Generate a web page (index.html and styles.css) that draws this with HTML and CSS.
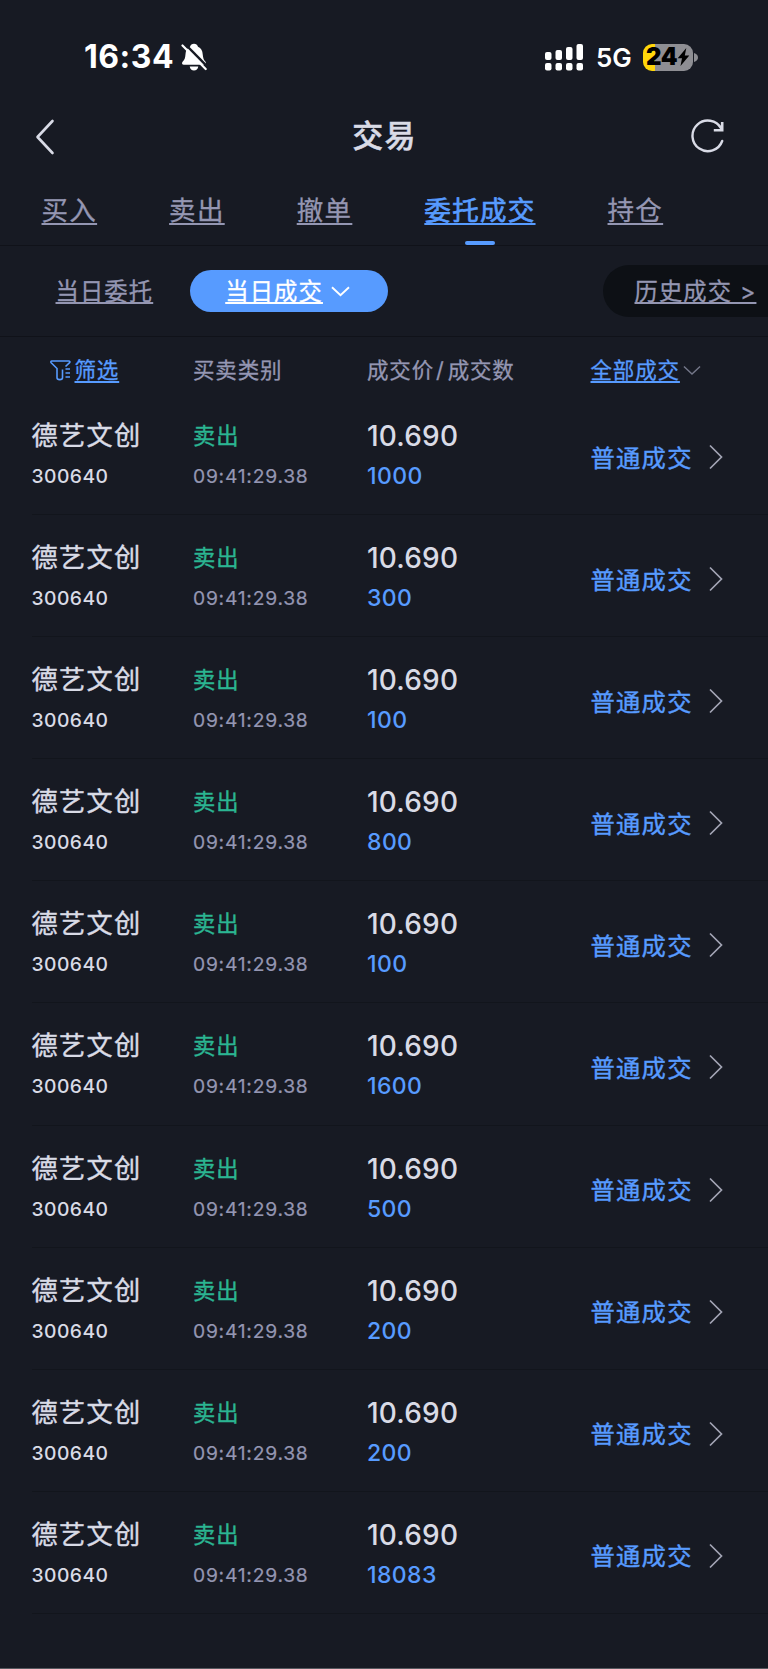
FILE: index.html
```html
<!DOCTYPE html>
<html lang="zh-CN">
<head>
<meta charset="utf-8">
<title>交易</title>
<link rel="stylesheet" href="styles.css">
</head>
<body>
<svg class="defs" aria-hidden="true">
  <symbol id="next" viewBox="0 0 16 28"><path d="M2 2.500 13.500 14 2 25.500" fill="none" stroke="#a3a5b5" stroke-width="1.700"/></symbol>
</svg>
<div class="screen">
  <div class="status">
    <span class="clock">16:34</span>
    <svg class="bell" viewBox="0 0 26 28"><path d="M13 .8c2 0 3.500 1.300 4 3 3.200 1.300 4.500 4.200 4.700 7.400.3 4 1.200 5.800 2.800 7.600.8 1 .5 3-1.300 3H2.800c-1.800 0-2.300-1.900-1.200-3 2-2 2.600-3.800 2.900-7.600.2-3.200 1.500-6.100 4.500-7.400.5-1.700 2-3 4-3zM8.700 23.400h8.600c-.4 2.500-2 4-4.300 4s-3.900-1.500-4.300-4z" fill="#fff"/><path d="M3.500.5 27 24.200" stroke="#171a23" stroke-width="2.400"/><path d="M1.500 2.500 24.700 26" stroke="#fff" stroke-width="2.200" stroke-linecap="round"/></svg>
    <svg class="signal" viewBox="0 0 38 27" fill="#fff"><rect x="0" y="8" width="6.500" height="8" rx="2"/><rect x="10.500" y="6" width="6.500" height="10" rx="2"/><rect x="21" y="3" width="6.500" height="13" rx="2"/><rect x="31.500" y="0" width="6.500" height="16" rx="2"/><rect x="0" y="19" width="6.500" height="7.500" rx="2"/><rect x="10.500" y="19" width="6.500" height="7.500" rx="2"/><rect x="21" y="19" width="6.500" height="7.500" rx="2"/><rect x="31.500" y="19" width="6.500" height="7.500" rx="2"/></svg>
    <span class="net">5G</span>
    <span class="battery"><span class="level">24</span><svg class="bolt" viewBox="0 0 12 18"><path d="M8.800 0 .2 10.300h4.300L3 18l8.800-10.500H7.300z"/></svg></span>
    <svg class="cap" viewBox="0 0 4 9"><path d="M0 0c2.500.6 4 2.300 4 4.500S2.500 8.400 0 9z" fill="#8e8e93"/></svg>
  </div>

  <header class="nav">
    <svg class="back" viewBox="0 0 20 36"><path d="M17.500 2 2.500 18l15 16" fill="none" stroke="#d9dbe6" stroke-width="2.600" stroke-linecap="round" stroke-linejoin="round"/></svg>
    <h1 class="title">交易</h1>
    <svg class="reload" viewBox="0 0 34 34"><path d="M31.200 22A15.300 15.300 0 1 1 30.200 9.500" fill="none" stroke="#d9dbe6" stroke-width="2.400" stroke-linecap="round"/><path d="M31.200 3v8.300h-8.400" fill="none" stroke="#d9dbe6" stroke-width="2.600"/></svg>
  </header>

  <nav class="tabs">
    <a class="tab">买入</a><a class="tab">卖出</a><a class="tab">撤单</a><a class="tab active">委托成交</a><a class="tab">持仓</a>
  </nav>

  <div class="filters">
    <a class="sub">当日委托</a>
    <div class="pill"><a class="sub">当日成交</a><svg class="down" viewBox="0 0 19 11"><path d="M1 1.200 9.500 9.300 18 1.200" fill="none" stroke="#fff" stroke-width="1.900"/></svg></div>
    <div class="history"><a class="sub">历史成交 &gt;</a></div>
  </div>

  <div class="grid head">
    <div class="filter"><svg class="funnel" viewBox="0 0 21 21"><path d="M15.500 6.500 19.600 2.700C20.200 2 19.800 1 18.900 1H1.800C.9 1 .6 2 1.200 2.700L7 8.500v9.300c0 2.400 5.500 2.400 5.500 0V9.500M15.500 9h4.500M15.500 13h4.500M15.500 17h4.500" fill="none" stroke="#579bff" stroke-width="1.600"/></svg><a class="link">筛选</a></div>
    <div>买卖类别</div>
    <div>成交价<span class="slash">/</span>成交数</div>
    <div class="all"><a class="link">全部成交</a><svg class="caret" viewBox="0 0 19 11"><path d="M1 1.200 9.500 9.300 18 1.200" fill="none" stroke="#747789" stroke-width="1.500"/></svg></div>
  </div>

  <main>
    <div class="grid row"><div><div class="name">德艺文创</div><div class="code">300640</div></div><div><div class="side">卖出</div><div class="time">09:41:29.38</div></div><div><div class="price">10.690</div><div class="qty">1000</div></div><div class="kind">普通成交<svg class="next"><use href="#next"/></svg></div></div>
    <div class="grid row"><div><div class="name">德艺文创</div><div class="code">300640</div></div><div><div class="side">卖出</div><div class="time">09:41:29.38</div></div><div><div class="price">10.690</div><div class="qty">300</div></div><div class="kind">普通成交<svg class="next"><use href="#next"/></svg></div></div>
    <div class="grid row"><div><div class="name">德艺文创</div><div class="code">300640</div></div><div><div class="side">卖出</div><div class="time">09:41:29.38</div></div><div><div class="price">10.690</div><div class="qty">100</div></div><div class="kind">普通成交<svg class="next"><use href="#next"/></svg></div></div>
    <div class="grid row"><div><div class="name">德艺文创</div><div class="code">300640</div></div><div><div class="side">卖出</div><div class="time">09:41:29.38</div></div><div><div class="price">10.690</div><div class="qty">800</div></div><div class="kind">普通成交<svg class="next"><use href="#next"/></svg></div></div>
    <div class="grid row"><div><div class="name">德艺文创</div><div class="code">300640</div></div><div><div class="side">卖出</div><div class="time">09:41:29.38</div></div><div><div class="price">10.690</div><div class="qty">100</div></div><div class="kind">普通成交<svg class="next"><use href="#next"/></svg></div></div>
    <div class="grid row"><div><div class="name">德艺文创</div><div class="code">300640</div></div><div><div class="side">卖出</div><div class="time">09:41:29.38</div></div><div><div class="price">10.690</div><div class="qty">1600</div></div><div class="kind">普通成交<svg class="next"><use href="#next"/></svg></div></div>
    <div class="grid row"><div><div class="name">德艺文创</div><div class="code">300640</div></div><div><div class="side">卖出</div><div class="time">09:41:29.38</div></div><div><div class="price">10.690</div><div class="qty">500</div></div><div class="kind">普通成交<svg class="next"><use href="#next"/></svg></div></div>
    <div class="grid row"><div><div class="name">德艺文创</div><div class="code">300640</div></div><div><div class="side">卖出</div><div class="time">09:41:29.38</div></div><div><div class="price">10.690</div><div class="qty">200</div></div><div class="kind">普通成交<svg class="next"><use href="#next"/></svg></div></div>
    <div class="grid row"><div><div class="name">德艺文创</div><div class="code">300640</div></div><div><div class="side">卖出</div><div class="time">09:41:29.38</div></div><div><div class="price">10.690</div><div class="qty">200</div></div><div class="kind">普通成交<svg class="next"><use href="#next"/></svg></div></div>
    <div class="grid row"><div><div class="name">德艺文创</div><div class="code">300640</div></div><div><div class="side">卖出</div><div class="time">09:41:29.38</div></div><div><div class="price">10.690</div><div class="qty">18083</div></div><div class="kind">普通成交<svg class="next"><use href="#next"/></svg></div></div>
  </main>
</div>
</body>
</html>
```

FILE: styles.css
```css
* { box-sizing: border-box; }
body { margin: 0; background: #171a23; font-family: "Inter", "Noto Sans CJK SC", sans-serif; color: #d9dbe6; }
svg { display: block; flex: none; }
.defs { display: none; }
.screen { width: 768px; height: 1669px; overflow: hidden; border-bottom: 1px solid #57595f; white-space: nowrap; }

.status { display: flex; align-items: center; height: 114px; padding-left: 84px; color: #fff; }
.clock { width: 96px; font-size: 32px; font-weight: 700; letter-spacing: .5px; line-height: 36px; }
.bell { width: 26px; height: 28px; margin-left: .5px; }
.signal { width: 38px; height: 27px; margin-left: 338.500px; }
.net { width: 47px; margin-left: 13px; padding-top: 2px; font-size: 26px; font-weight: 600; line-height: 32px; }
.battery { display: flex; align-items: center; width: 50px; height: 27px; padding-left: 3px; border-radius: 9px; background: linear-gradient(90deg, #ffd60a 12px, #8e8e93 12px); }
.level { width: 31px; font-size: 24px; font-weight: 900; letter-spacing: -.3px; line-height: 26px; color: #000; }
.bolt { width: 13px; height: 18px; }
.cap { width: 4px; height: 9px; margin-left: 1px; }

.nav { display: flex; align-items: center; justify-content: space-between; height: 46px; padding: 0 43px 0 35px; }
.back { width: 20px; height: 36px; margin-right: 14px; }
.title { margin: 0 0 2px 9px; font-size: 31px; font-weight: 500; letter-spacing: 1.300px; line-height: 44px; -webkit-text-stroke: .5px; }
.reload { width: 34px; height: 34px; margin-bottom: 2px; }

.tabs { display: flex; gap: 72px; height: 86px; padding: 30px 0 0 41.500px; border-bottom: 1px solid #101219; font-size: 26.500px; letter-spacing: 1.300px; line-height: 40px; color: #9496b2; -webkit-text-stroke: .3px; }
.tab, .sub, .link { text-decoration: underline; text-decoration-skip-ink: none; text-decoration-thickness: 1.700px; text-underline-offset: 3px; }
.tab { display: flex; flex-direction: column; align-items: center; }
.active { color: #579bff; -webkit-text-stroke: .7px; }
.active::after { content: ""; width: 30px; height: 4px; margin-top: 11px; border-radius: 2px; background: #579bff; }

.filters { display: flex; align-items: center; height: 91px; padding-left: 55.500px; border-bottom: 1px solid #101219; font-size: 23.300px; letter-spacing: 1.130px; line-height: 36px; color: #9496b2; -webkit-text-stroke: .3px; }
.sub { padding-top: 2px; text-underline-offset: 2px; }
.pill { display: flex; align-items: center; width: 197.500px; height: 42px; margin-left: 37px; padding-left: 35px; border-radius: 21px; background: #579bff; color: #fff; }
.down { width: 19px; height: 11px; margin-left: 8px; }
.history { display: flex; align-items: center; width: 165px; height: 52px; margin-left: auto; padding-left: 31.500px; border-radius: 26px 0 0 26px; background: #0d1015; }

.grid { display: grid; grid-template-columns: 161.500px 174px 223.500px 1fr; padding-left: 31.500px; }
.head { height: 56px; padding-top: 15px; font-size: 21.500px; letter-spacing: .850px; line-height: 36px; color: #9496b2; -webkit-text-stroke: .3px; }
.filter { display: flex; padding-left: 18px; }
.funnel { width: 21px; height: 21px; margin: 8px 4px 0 0; }
.link { color: #579bff; }
.slash { margin: 0 3px 0 2px; }
.all { display: flex; }
.caret { width: 18px; height: 11px; margin: 13px 0 0 3px; }

.row { height: 122.100px; padding-top: 21px; background: linear-gradient(#12151c, #12151c) 32px 100% / 736px 1px no-repeat; }
.name, .side, .price { height: 44px; line-height: 44px; }
.code, .time, .qty { height: 36px; line-height: 36px; }
.name { font-size: 26.200px; letter-spacing: 1.300px; -webkit-text-stroke: .4px; }
.code { font-size: 19.300px; font-weight: 500; letter-spacing: .450px; }
.side { font-size: 22.300px; letter-spacing: 1px; color: #2bb592; -webkit-text-stroke: .4px; }
.time { font-size: 19.300px; letter-spacing: .750px; color: #9496b2; -webkit-text-stroke: .2px; }
.price { font-size: 28px; font-weight: 500; letter-spacing: .200px; }
.qty { font-size: 23px; font-weight: 500; letter-spacing: .400px; color: #579bff; }
.kind { display: flex; align-items: center; height: 84px; font-size: 24.300px; letter-spacing: 1.250px; color: #579bff; -webkit-text-stroke: .4px; }
.next { width: 16px; height: 28px; margin: 2px 0 0 15.500px; }
```
